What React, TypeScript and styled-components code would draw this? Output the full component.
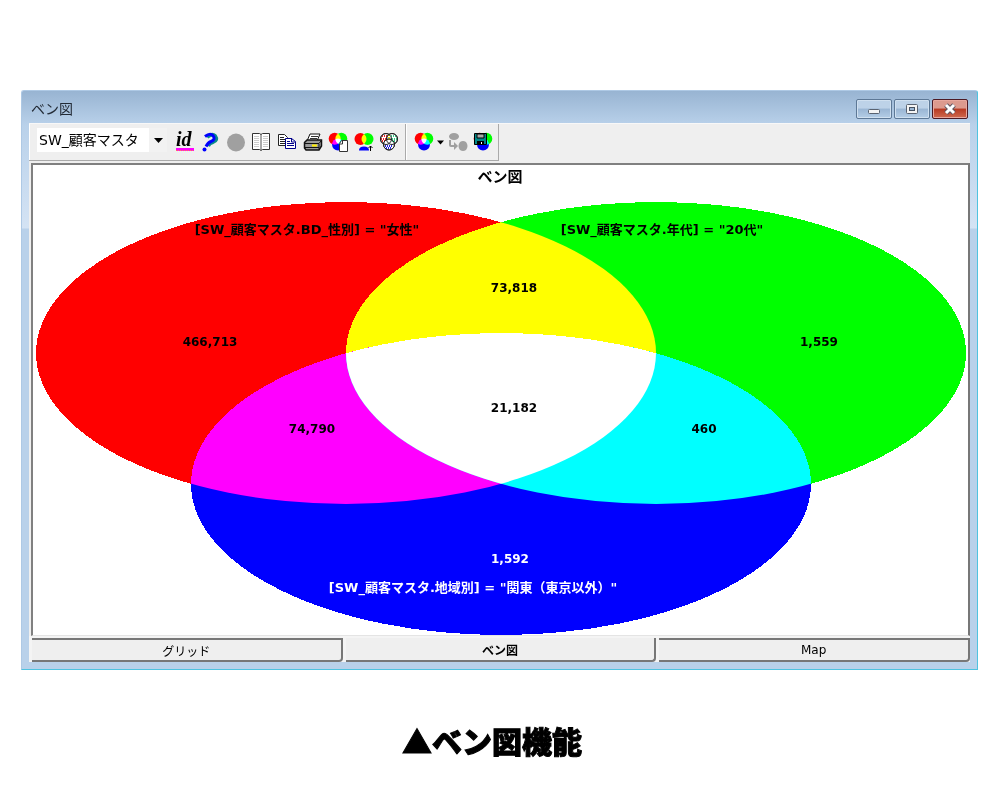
import React from "react";
import styled, { createGlobalStyle } from "styled-components";

const ui = `"DejaVu Sans", "Noto Sans CJK JP", sans-serif`;

const GlobalStyle = createGlobalStyle`
  * { box-sizing: border-box; }
  body { margin: 0; background: #fff; color: #000; font-family: ${ui}; }
  button, select { font: inherit; color: inherit; margin: 0; border: 0; padding: 0; background: none; }
`;

const Page = styled.main`
  padding: 90px 22px 24px 21px;
`;

const Window = styled.section`
  padding: 0 7px 7px;
  border: 1px solid #aec9e5;
  border-right-color: #4fc3e0;
  border-bottom-color: #4fc3e0;
  border-radius: 3px 3px 0 0;
  background: linear-gradient(#98b4d2 0, #b9d1ea 34px, #d4e3f4 137px, #b9d1ea 138px);
`;

const TitleBar = styled.header`
  display: flex;
  align-items: center;
  justify-content: space-between;
  height: 32px;
  padding: 4px 2px 0 2px;
`;

const Title = styled.h1`
  margin: 0;
  font-size: 14px;
  font-weight: 400;
  line-height: 20px;
  color: #222a35;
`;

const WindowButtons = styled.div`
  display: flex;
  gap: 2px;
`;

const WindowButton = styled.button<{ $close?: boolean }>`
  display: grid;
  place-items: center;
  width: 36px;
  height: 20px;
  border: 1px solid ${(p) => (p.$close ? "#4c1a24" : "#5d7896")};
  border-radius: 2px;
  box-shadow: inset 0 0 0 1px ${(p) => (p.$close ? "#e8a89e" : "#d0e0f0")};
  background: ${(p) =>
    p.$close
      ? "linear-gradient(#dc9a8e 0 45%, #b83a22 50%, #cf6a50)"
      : "linear-gradient(#bdd2e8 0 45%, #9ab6d4 50%, #b4cde6)"};
`;

const Client = styled.div`
  background: #efefef;
`;

const Toolbar = styled.div`
  display: flex;
  height: 40px;
  border-top: 1px solid #f8f8f8;
`;

const ToolGroup = styled.div`
  display: flex;
  align-items: center;
  height: 37px;
  padding: 0 3px 0 5px;
  border-right: 1px solid #aaa;
  border-bottom: 1px solid #aaa;
  box-shadow: inset 1px 0 #fff;
`;

const ToolRow = styled.div`
  display: grid;
  grid-template-columns: repeat(9, 1fr);
  width: 230px;
`;

const ToolButton = styled.button`
  display: grid;
  place-items: center;
  min-width: 25px;
  height: 26px;
`;

const DropButton = styled.button`
  display: grid;
  place-items: center;
  width: 9px;
  height: 26px;
`;

const Combo = styled.label`
  display: grid;
  grid-template-columns: 112px 18px;
  align-items: center;
  height: 24px;
  margin: 0 5px 4px 3px;
  background: #fff;
  & > * { grid-row: 1; }
`;

const ComboSelect = styled.select`
  grid-column: 1 / 3;
  appearance: none;
  height: 24px;
  padding: 0 18px 0 2px;
  font-size: 14px;
  line-height: 24px;
`;

const ComboArrow = styled.span`
  grid-column: 2;
  display: grid;
  place-items: center;
  height: 24px;
  background: #f2f2f2;
  pointer-events: none;
`;

const Panel = styled.div`
  border: 2px solid #808080;
  border-bottom: 1px solid #e4e4e4;
  border-right-color: #777;
  margin-left: 2px;
  padding-right: 1px;
  background: #fff;
`;

const Chart = styled.svg`
  display: block;
  width: 100%;
  height: auto;
  font: 700 12px ${ui};
`;

const Tabs = styled.nav`
  display: grid;
  grid-template-columns: repeat(3, 1fr);
  padding-top: 2px;
  background: #f4f4f4;
`;

const Tab = styled.button<{ $active?: boolean }>`
  height: 24px;
  margin-left: 3px;
  border: solid #777;
  border-width: ${(p) => (p.$active ? "0 2px 2px 0" : "2px 2px 2px 0")};
  border-bottom-right-radius: 4px;
  background: #efefef;
  font-size: 12px;
  font-weight: ${(p) => (p.$active ? 700 : 400)};
`;

const Caption = styled.p`
  margin: 48px 0 0;
  padding-right: 15px;
  text-align: center;
  font: 900 30px/44px "Noto Sans CJK JP", sans-serif;
  -webkit-text-stroke: 1px #000;
`;

const LightMix = styled.g`
  isolation: isolate;
  & > * { mix-blend-mode: screen; }
`;

const Icon = ({ children }: { children: React.ReactNode }) => (
  <svg width="20" height="20" viewBox="0 0 20 20" overflow="visible" aria-hidden="true">
    {children}
  </svg>
);

const Arrow = ({ w = 9 }: { w?: number }) => (
  <svg width={w} height="5" viewBox="0 0 9 5" aria-hidden="true">
    <path d="M0 0h9L4.500 5z" />
  </svg>
);

const Rings = () => (
  <LightMix>
    <circle cx="6.700" cy="6.700" r="6" fill="#f00" />
    <circle cx="13.300" cy="6.700" r="6" fill="#0f0" />
    <circle cx="10" cy="12.500" r="6" fill="#00f" />
  </LightMix>
);

const tools: { name: string; art: React.ReactNode }[] = [
  {
    name: "ID",
    art: (
      <>
        <text x="1" y="14" fontFamily="Liberation Serif, serif" fontSize="20" fontStyle="italic" fontWeight="700">id</text>
        <path d="M1 17h18" stroke="#f0f" strokeWidth="2" />
        <path d="M1 18.500h18" stroke="#ff8a50" strokeDasharray="1 1" />
        <path d="M2 18.500h18" stroke="#f0f" strokeDasharray="1 1" />
      </>
    ),
  },
  {
    name: "ヘルプ",
    art: (
      <>
        <path d="M7 5q5-4 8-1 3 4-2 6-4 1-5 4" fill="none" stroke="#0a8a8a" strokeWidth="4" />
        <path d="M5 4.500q5-4 8-1 3 4-2 6-3 1-5 5" fill="none" stroke="#00f" strokeWidth="3" />
        <circle cx="4.500" cy="17.500" r="2" fill="#00f" />
      </>
    ),
  },
  { name: "停止", art: <circle cx="10" cy="10.500" r="9" fill="#a0a0a0" /> },
  {
    name: "一覧",
    art: (
      <>
        <path d="M1.500 1.500h7l1.500 1 1.500-1h7v16h-7l-1.500 1-1.500-1h-7z" fill="#fff" stroke="#333" />
        <path d="M10 2v16" stroke="#555" />
        <path d="M3 4.500h5m4 0h5m-14 2h5m4 0h5m-14 2h5m4 0h5m-14 2h5m4 0h5m-14 2h5m4 0h5m-14 2h5m4 0h5" stroke="#ccc" />
      </>
    ),
  },
  {
    name: "コピー",
    art: (
      <>
        <path d="M1.500 2.500h6l3 3v8h-9z" fill="#fff" stroke="#222" />
        <path d="M3 5.500h4m-4 2h5m-5 2h5m-5 2h5" stroke="#222" />
        <path d="M8.500 6.500h6l4 3v7h-10z" fill="#fff" stroke="#00008b" />
        <path d="M14.500 6v4H18M10 9.500h3m-3 2h7m-7 2h7" fill="none" stroke="#00008b" />
      </>
    ),
  },
  {
    name: "印刷",
    art: (
      <>
        <path d="M4 9l3-7h10l-3 7z" fill="#fff" stroke="#111" />
        <path d="M8 4.500h7m-8 2h7" stroke="#333" />
        <path d="M1.500 10.500L4 8h14.500v6L16 18H3l-1.500-2z" fill="#999" stroke="#111" strokeWidth="1.500" />
        <path d="M2 11.500h14m-14 4h14m0-4L18 9m-2 3v5" stroke="#111" />
        <path d="M9 13.500h5" stroke="#fe0" strokeWidth="2" />
      </>
    ),
  },
  {
    name: "ベン図をコピー",
    art: (
      <>
        <Rings />
        <path d="M13.500 8.500h6v11h-8v-8z" fill="#fff" stroke="#333" />
        <path d="M14.500 9v3H12" fill="none" stroke="#333" />
      </>
    ),
  },
  {
    name: "上へ移動",
    art: (
      <>
        <LightMix>
          <circle cx="6.500" cy="7" r="6" fill="#f00" />
          <circle cx="13.500" cy="7" r="6" fill="#0f0" />
        </LightMix>
        <path d="M5 18.500q0-4 5-4t5 4z" fill="#00f" />
        <path d="M16.500 19v-5m-2 2l2-2 2 2" fill="none" stroke="#000" />
      </>
    ),
  },
  {
    name: "模様",
    art: (
      <>
        <g fill="#fff" stroke="#333">
          <circle cx="7" cy="7" r="5.500" />
          <circle cx="13" cy="7" r="5.500" />
          <circle cx="10" cy="12.500" r="5.500" />
        </g>
        <g fill="none" strokeWidth="2" strokeDasharray="1 1">
          <path d="M3 4h5M2 7h5M3 9h4" stroke="#e22" />
          <path d="M12 4h5M13 7h5M13 9h4" stroke="#3c8" />
          <path d="M6 14h8M7 16h6" stroke="#22d" />
          <path d="M10 3v5" stroke="#ee0" />
        </g>
        <g fill="none" stroke="#222">
          <circle cx="7" cy="7" r="5.500" />
          <circle cx="13" cy="7" r="5.500" />
          <circle cx="10" cy="12.500" r="5.500" />
        </g>
      </>
    ),
  },
];

const Label = ({ x, y, size, light, children }: { x: number; y: number; size?: number; light?: boolean; children: React.ReactNode }) => (
  <text x={x} y={y} fontSize={size} textAnchor="middle" fill={light ? "#fff" : "#000"}>
    {children}
  </text>
);

export default function App() {
  return (
    <Page>
      <GlobalStyle />
      <Window>
        <TitleBar>
          <Title>ベン図</Title>
          <WindowButtons>
            <WindowButton aria-label="最小化">
              <svg width="14" height="14"><rect x="1.500" y="7.500" width="11" height="4" rx="1" fill="#f4f4f4" stroke="#596270" /></svg>
            </WindowButton>
            <WindowButton aria-label="最大化">
              <svg width="14" height="14"><rect x="1.500" y="2.500" width="11" height="9" rx="1" fill="#f4f4f4" stroke="#596270" /><rect x="4.500" y="5.500" width="5" height="3" fill="#9ab6d4" stroke="#455060" /></svg>
            </WindowButton>
            <WindowButton $close aria-label="閉じる">
              <svg width="14" height="14"><path d="M3 3l8 8M11 3l-8 8" stroke="#5e5560" strokeWidth="5" /><path d="M3 3l8 8M11 3l-8 8" stroke="#fff" strokeWidth="3" /></svg>
            </WindowButton>
          </WindowButtons>
        </TitleBar>
        <Client>
          <Toolbar>
            <ToolGroup>
              <Combo>
                <ComboSelect aria-label="テーブル">
                  <option>SW_顧客マスタ</option>
                </ComboSelect>
                <ComboArrow><Arrow /></ComboArrow>
              </Combo>
              <ToolRow>
                {tools.map((t) => (
                  <ToolButton key={t.name} aria-label={t.name}><Icon>{t.art}</Icon></ToolButton>
                ))}
              </ToolRow>
            </ToolGroup>
            <ToolGroup>
              <ToolButton aria-label="ベン図"><Icon><Rings /></Icon></ToolButton>
              <DropButton aria-label="ベン図の種類"><Arrow w={7} /></DropButton>
              <ToolButton aria-label="入れ替え">
                <Icon>
                  <g fill="#a0a0a0">
                    <ellipse cx="6" cy="4.500" rx="5" ry="3.500" />
                    <path d="M12 10q3-2 6 0 3 4 0 8-3 2-6 0-3-4 0-8" />
                    <path d="M1 8h2v5h3v-3l4 4-4 4v-3H3q-2 0-2-2z" />
                  </g>
                </Icon>
              </ToolButton>
              <ToolButton aria-label="保存">
                <Icon>
                  <Rings />
                  <path d="M1.500 1.500h12v11h-12z" fill="#088" stroke="#000" />
                  <path d="M4 2h7v4H4z" fill="#aaa" stroke="#000" />
                  <path d="M4 9h7v4H4z" />
                  <path d="M8.500 10v2" stroke="#fff" />
                </Icon>
              </ToolButton>
            </ToolGroup>
          </Toolbar>
          <Panel>
            <Chart viewBox="0 0 934 470" role="img" aria-label="ベン図">
              <defs>
                <clipPath id="red"><ellipse cx="313" cy="188" rx="310" ry="151" /></clipPath>
                <clipPath id="green"><ellipse cx="623" cy="188" rx="310" ry="151" /></clipPath>
              </defs>
              <g shapeRendering="crispEdges">
                <ellipse cx="313" cy="188" rx="310" ry="151" fill="#f00" />
                <ellipse cx="623" cy="188" rx="310" ry="151" fill="#0f0" />
                <ellipse cx="468" cy="319" rx="310" ry="151" fill="#00f" />
                <g clipPath="url(#red)">
                  <ellipse cx="623" cy="188" rx="310" ry="151" fill="#ff0" />
                  <ellipse cx="468" cy="319" rx="310" ry="151" fill="#f0f" />
                </g>
                <g clipPath="url(#green)">
                  <ellipse cx="468" cy="319" rx="310" ry="151" fill="#0ff" />
                  <g clipPath="url(#red)">
                    <ellipse cx="468" cy="319" rx="310" ry="151" fill="#fff" />
                  </g>
                </g>
              </g>
              <Label x={467} y={17} size={15}>ベン図</Label>
              <Label x={274} y={69} size={13}>[SW_顧客マスタ.BD_性別] = "女性"</Label>
              <Label x={629} y={69} size={13}>[SW_顧客マスタ.年代] = "20代"</Label>
              <Label x={481} y={127}>73,818</Label>
              <Label x={177} y={181}>466,713</Label>
              <Label x={786} y={181}>1,559</Label>
              <Label x={481} y={247}>21,182</Label>
              <Label x={279} y={268}>74,790</Label>
              <Label x={671} y={268}>460</Label>
              <Label x={477} y={398} light>1,592</Label>
              <Label x={440} y={427} size={13} light>[SW_顧客マスタ.地域別] = "関東（東京以外）"</Label>
            </Chart>
          </Panel>
          <Tabs>
            <Tab>グリッド</Tab>
            <Tab $active>ベン図</Tab>
            <Tab>Map</Tab>
          </Tabs>
        </Client>
      </Window>
      <Caption>▲ベン図機能</Caption>
    </Page>
  );
}
